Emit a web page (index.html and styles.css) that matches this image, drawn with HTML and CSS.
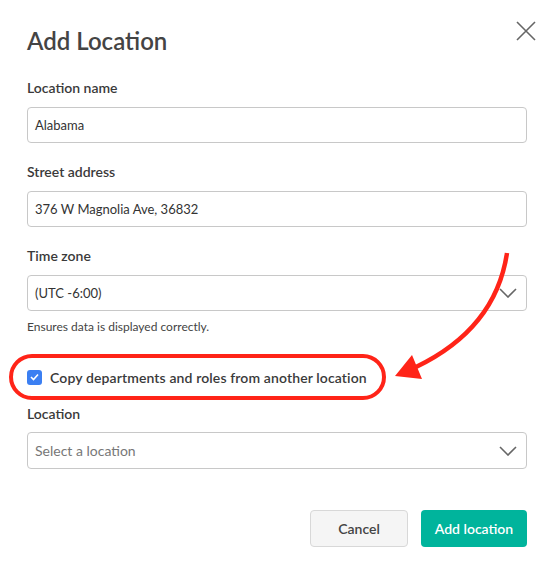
FILE: index.html
```html
<!DOCTYPE html>
<html lang="en">
<head>
    <meta charset="UTF-8">
    <meta name="viewport" content="width=device-width, initial-scale=1.0">
    <title>Add Location</title>
    <link rel="stylesheet" href="styles.css">
</head>
<body>
    <div class="modal">
        <div class="modal-header">
            <h1>Add Location</h1>
            <button class="close-btn" type="button" aria-label="Close">
                <svg width="20" height="20" viewBox="0 0 20 20">
                    <path d="M1 1 L19 19 M19 1 L1 19" stroke="#666" stroke-width="1.6" fill="none"/>
                </svg>
            </button>
        </div>

        <div class="field">
            <label class="label">Location name</label>
            <div class="input">Alabama</div>
        </div>

        <div class="field">
            <label class="label">Street address</label>
            <div class="input">376 W Magnolia Ave, 36832</div>
        </div>

        <div class="field field-tz">
            <label class="label">Time zone</label>
            <div class="input select">
                <span>(UTC -6:00)</span>
                <svg class="chevron" width="18" height="10" viewBox="0 0 18 10">
                    <path d="M1 1 L9 9 L17 1" stroke="#666" stroke-width="1.6" fill="none"/>
                </svg>
            </div>
            <p class="hint">Ensures data is displayed correctly.</p>
        </div>

        <div class="check-row">
            <span class="checkbox">
                <svg width="9" height="8" viewBox="0 0 9 8">
                    <path d="M1 4 L3.5 6.5 L8 1.5" stroke="#fff" stroke-width="1.6" fill="none"/>
                </svg>
            </span>
            <span class="check-label">Copy departments and roles from another location</span>
        </div>

        <div class="field field-loc">
            <label class="label">Location</label>
            <div class="input select placeholder">
                <span>Select a location</span>
                <svg class="chevron" width="18" height="10" viewBox="0 0 18 10">
                    <path d="M1 1 L9 9 L17 1" stroke="#666" stroke-width="1.6" fill="none"/>
                </svg>
            </div>
        </div>

        <div class="actions">
            <button class="btn btn-cancel" type="button">Cancel</button>
            <button class="btn btn-primary" type="button">Add location</button>
        </div>
    </div>

    <!-- annotation drawn over the dialog -->
    <svg class="annotation" width="550" height="569" viewBox="0 0 550 569">
        <rect x="11" y="356" width="373" height="42" rx="21" fill="none" stroke="#ff2418" stroke-width="4"/>
        <path d="M507 253 C 500 300, 472 340, 416 367" fill="none" stroke="#ff2418" stroke-width="4.5"/>
        <polygon points="395,376 412,355 422,379" fill="#ff2418"/>
    </svg>
</body>
</html>
```

FILE: styles.css
```css
body {
    margin: 0;
    background: #fff;
    font-family: 'Lato', 'Liberation Sans', sans-serif;
    color: #333;
}
.modal {
    position: relative;
    width: 550px;
    height: 569px;
    box-sizing: border-box;
    padding: 0 23px 0 27px;
}
.modal-header {
    display: flex;
    justify-content: space-between;
    align-items: flex-start;
    height: 78px;
}
h1 {
    margin: 0;
    padding-top: 26px;
    font-size: 24px;
    line-height: 30px;
    font-weight: 600;
    color: #444;
}
.close-btn {
    background: none;
    border: none;
    padding: 0;
    margin: 21px -9px 0 0;
    width: 20px;
    height: 20px;
    cursor: pointer;
}
.close-btn svg {
    display: block;
}
.field {
    display: flex;
    flex-direction: column;
    margin-bottom: 19px;
}
.label {
    font-size: 14px;
    line-height: 20px;
    font-weight: 600;
    color: #3a3a3a;
    margin-bottom: 9px;
}
.input {
    height: 36px;
    box-sizing: border-box;
    border: 1px solid #c8c8c8;
    border-radius: 4px;
    padding: 0 7px;
    display: flex;
    align-items: center;
    font-size: 13px;
    color: #333;
}
.select {
    justify-content: space-between;
    padding-right: 9px;
}
.placeholder {
    color: #777;
    height: 37px;
    font-size: 14px;
}
.chevron {
    display: block;
}
.field-tz {
    margin-bottom: 0;
}
.hint {
    margin: 8px 0 0;
    font-size: 12px;
    line-height: 16px;
    color: #444;
}
.check-row {
    display: flex;
    align-items: center;
    gap: 8px;
    height: 20px;
    margin-top: 32px;
    margin-bottom: 17px;
}
.checkbox {
    width: 15px;
    height: 15px;
    border-radius: 3px;
    background: #3b7ff2;
    display: flex;
    align-items: center;
    justify-content: center;
}
.check-label {
    font-size: 14px;
    font-weight: 600;
    letter-spacing: 0.12px;
    color: #3a3a3a;
}
.field-loc {
    margin-bottom: 0;
}
.field-loc .label {
    margin-bottom: 8px;
}
.actions {
    display: flex;
    justify-content: flex-end;
    gap: 13px;
    margin-top: 41px;
}
.btn {
    height: 37px;
    border-radius: 4px;
    font-family: inherit;
    font-size: 14px;
    font-weight: 600;
    cursor: pointer;
}
.btn-cancel {
    width: 98px;
    background: #f5f5f5;
    border: 1px solid #d8d8d8;
    color: #444;
}
.btn-primary {
    width: 106px;
    background: #00b49c;
    border: none;
    color: #fff;
}
.annotation {
    position: absolute;
    top: 0;
    left: 0;
    pointer-events: none;
}
```
